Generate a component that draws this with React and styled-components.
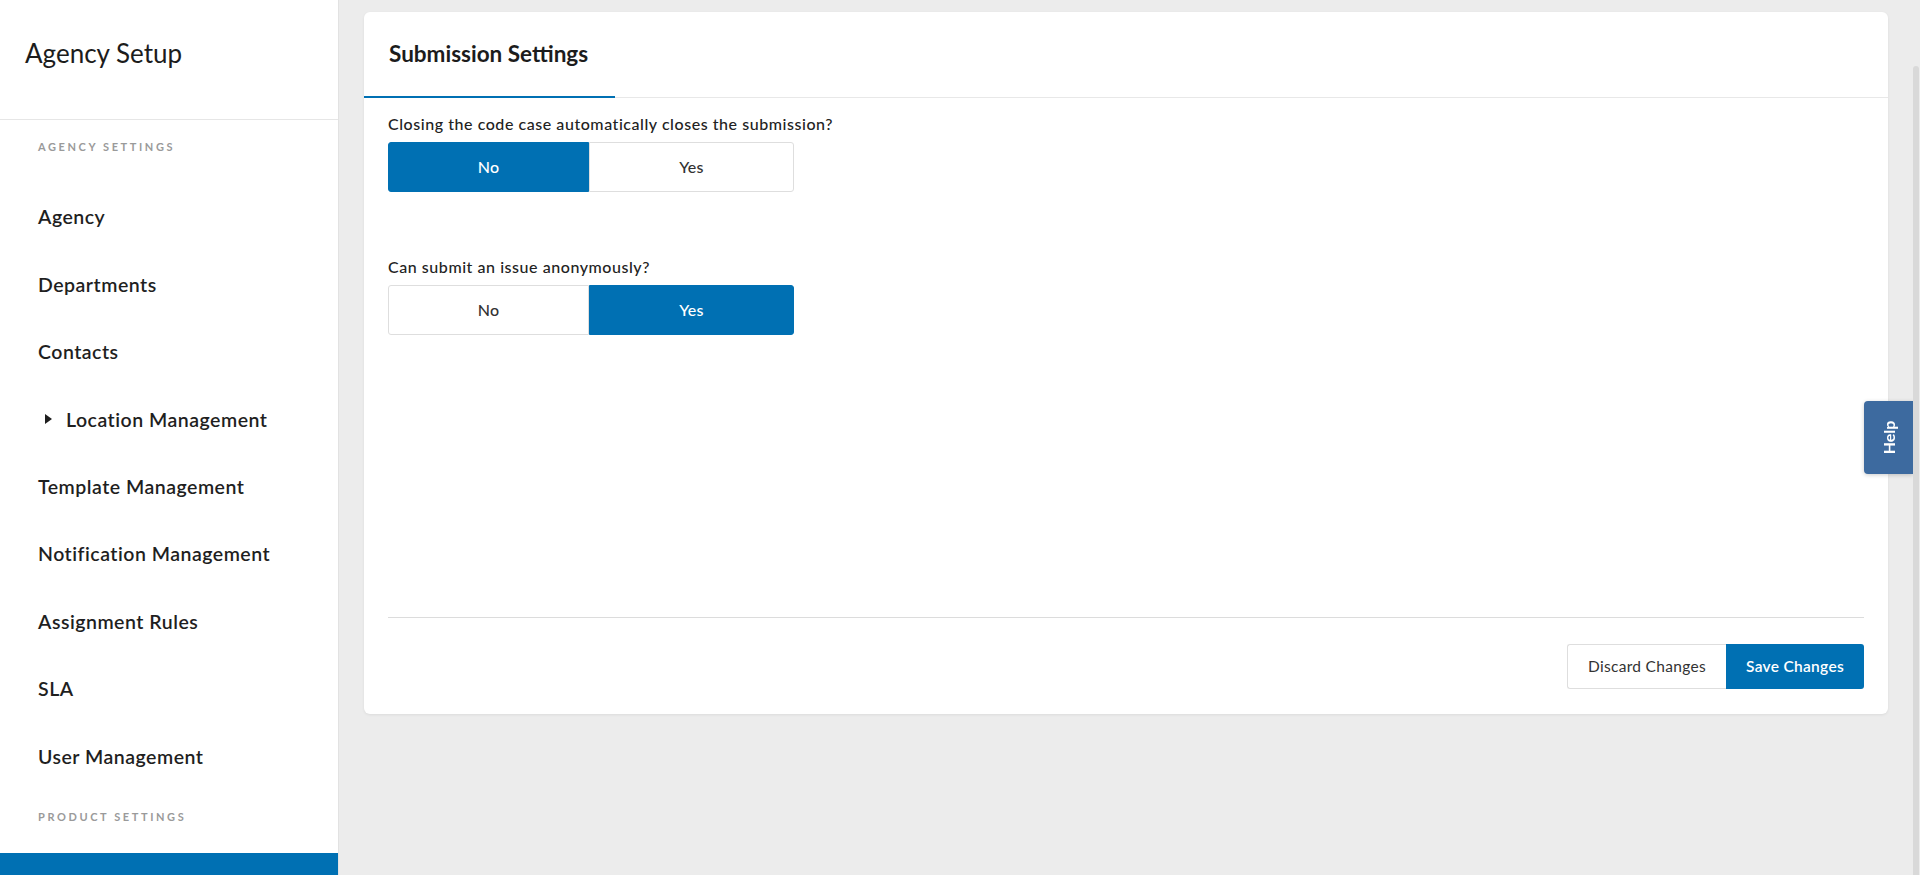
import React from "react";
import styled, { createGlobalStyle } from "styled-components";

const GlobalStyle = createGlobalStyle`
  html, body {
    margin: 0;
    padding: 0;
    height: 100%;
    overflow: hidden;
  }
  body {
    font-family: Lato, "Open Sans", sans-serif;
    color: #222;
  }
  * {
    box-sizing: border-box;
  }
`;

const navItems = [
  { label: "Agency" },
  { label: "Departments" },
  { label: "Contacts" },
  { label: "Location Management", caret: true },
  { label: "Template Management" },
  { label: "Notification Management" },
  { label: "Assignment Rules" },
  { label: "SLA" },
  { label: "User Management" },
];

const questions = [
  { text: "Closing the code case automatically closes the submission?", value: "No" },
  { text: "Can submit an issue anonymously?", value: "Yes" },
];

function Toggle({ value }) {
  return (
    <ToggleGroup>
      {["No", "Yes"].map((opt) => (
        <ToggleButton key={opt} active={opt === value}>
          {opt}
        </ToggleButton>
      ))}
    </ToggleGroup>
  );
}

export default function App() {
  return (
    <>
      <GlobalStyle />
      <Page>
        <Sidebar>
          <SidebarHeader>
            <Title>Agency Setup</Title>
          </SidebarHeader>
          <SectionLabel>Agency Settings</SectionLabel>
          <NavList>
            {navItems.map((item) => (
              <NavItem key={item.label} caret={item.caret}>
                {item.caret && <Caret />}
                {item.label}
              </NavItem>
            ))}
          </NavList>
          <SectionLabel>Product Settings</SectionLabel>
          <ActiveItem />
        </Sidebar>

        <Main>
          <Card>
            <CardHeader>
              <Tab>Submission Settings</Tab>
            </CardHeader>
            <CardBody>
              {questions.map((q) => (
                <Question key={q.text}>
                  <QuestionLabel>{q.text}</QuestionLabel>
                  <Toggle value={q.value} />
                </Question>
              ))}
            </CardBody>
            <CardFooter>
              <DiscardButton>Discard Changes</DiscardButton>
              <SaveButton>Save Changes</SaveButton>
            </CardFooter>
          </Card>
        </Main>

        <HelpTab>
          <span>Help</span>
        </HelpTab>
        <ScrollThumb />
      </Page>
    </>
  );
}

const Page = styled.div`
  display: flex;
  height: 100vh;
  width: 100vw;
  overflow: hidden;
`;

const Sidebar = styled.aside`
  width: 339px;
  flex-shrink: 0;
  background: #fff;
  border-right: 1px solid #e2e2e2;
  display: flex;
  flex-direction: column;
  overflow: hidden;
`;

const SidebarHeader = styled.div`
  height: 120px;
  padding: 37px 25px 0;
  border-bottom: 1px solid #e6e6e6;
  flex-shrink: 0;
`;

const Title = styled.h1`
  margin: 0;
  font-size: 26px;
  line-height: 32px;
  font-weight: 400;
  color: #1c1c1c;
`;

const SectionLabel = styled.div`
  margin: 19px 0 28px;
  padding-left: 38px;
  font-size: 11px;
  line-height: 16px;
  font-weight: 700;
  letter-spacing: 2.6px;
  text-transform: uppercase;
  color: #9a9a9a;
  flex-shrink: 0;
`;

const NavList = styled.nav`
  display: flex;
  flex-direction: column;
  flex-shrink: 0;
`;

const NavItem = styled.div`
  height: 67.45px;
  display: flex;
  align-items: center;
  gap: 14px;
  padding-left: ${({ caret }) => (caret ? "45px" : "38px")};
  font-size: 19.5px;
  font-weight: 600;
  letter-spacing: 0.5px;
  color: #1f1f1f;
`;

const Caret = styled.span`
  width: 0;
  height: 0;
  border-top: 5px solid transparent;
  border-bottom: 5px solid transparent;
  border-left: 7px solid #1f1f1f;
`;

const ActiveItem = styled.div`
  height: 67px;
  background: #0070b3;
  flex-shrink: 0;
`;

const Main = styled.main`
  flex: 1;
  background: #ececec;
  padding: 12px 32px 0 25px;
`;

const Card = styled.section`
  height: 701.5px;
  background: #fff;
  border-radius: 6px;
  box-shadow: 0 1px 3px rgba(0, 0, 0, 0.07);
  display: flex;
  flex-direction: column;
`;

const CardHeader = styled.div`
  height: 86px;
  border-bottom: 1px solid #e8e8e8;
  display: flex;
  flex-shrink: 0;
`;

const Tab = styled.div`
  width: 251px;
  padding: 28px 0 0 25px;
  border-bottom: 2px solid #0070b3;
  margin-bottom: -1px;
  font-size: 22.5px;
  line-height: 28px;
  font-weight: 700;
  color: #1c1c1c;
`;

const CardBody = styled.div`
  flex: 1;
  padding: 15.7px 24px 0 24px;
  display: flex;
  flex-direction: column;
  gap: 65px;
`;

const Question = styled.div`
  display: flex;
  flex-direction: column;
  gap: 8px;
`;

const QuestionLabel = styled.div`
  font-size: 16px;
  line-height: 20px;
  font-weight: 500;
  letter-spacing: 0.55px;
  color: #222;
`;

const ToggleGroup = styled.div`
  display: grid;
  grid-template-columns: 201px 205px;
  height: 50px;
`;

const ToggleButton = styled.div`
  display: flex;
  align-items: center;
  justify-content: center;
  font-size: 16px;
  font-weight: 500;
  letter-spacing: 0.3px;
  color: ${({ active }) => (active ? "#fff" : "#333")};
  background: ${({ active }) => (active ? "#0070b3" : "#fff")};
  border: 1px solid ${({ active }) => (active ? "#0070b3" : "#dedede")};

  &:first-child {
    border-radius: 3px 0 0 3px;
  }
  &:last-child {
    border-radius: 0 3px 3px 0;
  }
`;

const CardFooter = styled.div`
  margin: 0 24px;
  padding: 26px 0 24.5px;
  border-top: 1px solid #dcdcdc;
  display: flex;
  justify-content: flex-end;
`;

const FooterButton = styled.div`
  height: 45.5px;
  display: flex;
  align-items: center;
  justify-content: center;
  font-size: 15.5px;
  letter-spacing: 0.3px;
`;

const DiscardButton = styled(FooterButton)`
  width: 159px;
  background: #fff;
  color: #333;
  border: 1px solid #dedede;
  border-right: none;
  border-radius: 3px 0 0 3px;
`;

const SaveButton = styled(FooterButton)`
  width: 138px;
  background: #0070b3;
  color: #fff;
  font-weight: 600;
  border-radius: 0 3px 3px 0;
`;

const HelpTab = styled.div`
  position: fixed;
  left: 1864px;
  top: 401px;
  width: 49px;
  height: 73px;
  background: #3d6a9f;
  border-radius: 4px 0 0 4px;
  box-shadow: 0 1px 4px rgba(0, 0, 0, 0.2);
  display: flex;
  align-items: center;
  justify-content: center;

  span {
    transform: rotate(-90deg);
    color: #fff;
    font-size: 16px;
    font-weight: 700;
  }
`;

const ScrollThumb = styled.div`
  position: fixed;
  left: 1913px;
  top: 66px;
  width: 6px;
  bottom: 0;
  background: #d9d9d9;
  border-radius: 3px 3px 0 0;
`;
